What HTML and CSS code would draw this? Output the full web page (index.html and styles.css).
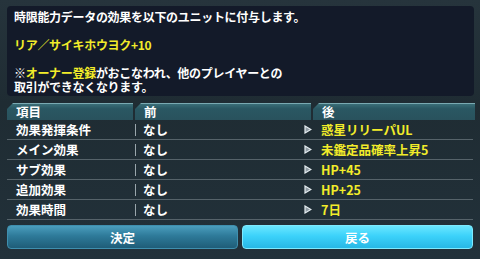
FILE: index.html
```html
<!DOCTYPE html>
<html lang="ja">
<head>
<meta charset="utf-8">
<link rel="stylesheet" href="styles.css">
</head>
<body>
<div class="panel">
  <div class="notice">
    <p class="line">時限能力データの効果を以下のユニットに付与します。</p>
    <p class="line blank">&nbsp;</p>
    <p class="line yellow">リア／サイキホウヨク+10</p>
    <p class="line blank">&nbsp;</p>
    <p class="line">※<span class="yellow">オーナー登録</span>がおこなわれ、他のプレイヤーとの</p>
    <p class="line">取引ができなくなります。</p>
  </div>

  <div class="table">
    <div class="head">
      <div class="hcell">項目</div>
      <div class="hcell">前</div>
      <div class="hcell">後</div>
    </div>
    <div class="row">
      <div class="c-label">効果発揮条件</div>
      <div class="c-before">なし</div>
      <div class="c-after"><svg class="arrow" viewBox="0 0 8 9"><polygon points="1,1 7,4.5 1,8" /></svg><span>惑星リリーパUL</span></div>
    </div>
    <div class="row">
      <div class="c-label">メイン効果</div>
      <div class="c-before">なし</div>
      <div class="c-after"><svg class="arrow" viewBox="0 0 8 9"><polygon points="1,1 7,4.5 1,8" /></svg><span>未鑑定品確率上昇5</span></div>
    </div>
    <div class="row">
      <div class="c-label">サブ効果</div>
      <div class="c-before">なし</div>
      <div class="c-after"><svg class="arrow" viewBox="0 0 8 9"><polygon points="1,1 7,4.5 1,8" /></svg><span>HP+45</span></div>
    </div>
    <div class="row">
      <div class="c-label">追加効果</div>
      <div class="c-before">なし</div>
      <div class="c-after"><svg class="arrow" viewBox="0 0 8 9"><polygon points="1,1 7,4.5 1,8" /></svg><span>HP+25</span></div>
    </div>
    <div class="row">
      <div class="c-label">効果時間</div>
      <div class="c-before">なし</div>
      <div class="c-after"><svg class="arrow" viewBox="0 0 8 9"><polygon points="1,1 7,4.5 1,8" /></svg><span>7日</span></div>
    </div>
  </div>

  <div class="buttons">
    <div class="btn btn-ok">決定</div>
    <div class="btn btn-back">戻る</div>
  </div>
</div>
</body>
</html>
```

FILE: styles.css
```css
* { box-sizing: border-box; }
html, body {
  margin: 0;
  padding: 0;
}
body {
  width: 480px;
  height: 259px;
  overflow: hidden;
  background: linear-gradient(180deg, #26343c 0%, #1f2c33 40%, #22313a 100%);
  font-family: "Noto Sans CJK JP", "Noto Sans", sans-serif;
  font-weight: 700;
  color: #ffffff;
}
.panel {
  padding: 6px 7px 0 7px;
}
.notice {
  background: #131a29;
  border-radius: 4px;
  height: 90px;
  padding: 4px 7px 0 7px;
  margin-right: -1px;
}
.line {
  margin: 0;
  font-size: 12px;
  line-height: 14px;
  letter-spacing: -0.3px;
  white-space: nowrap;
}
.yellow { color: #f2ec2a; }

.table {
  margin-top: 7px;
}
.head {
  display: grid;
  grid-template-columns: 126px 176px 1fr;
  gap: 2px;
  height: 17px;
  margin-right: -2px;
}
.hcell {
  background: linear-gradient(180deg, #3a6e78 0%, #2a5762 30%, #29525d 100%);
  border-top: 1px solid #7aaab2;
  clip-path: polygon(6px 0, 100% 0, 100% 100%, 0 100%, 0 6px);
  font-size: 12.5px;
  line-height: 15px;
  padding-left: 9px;
}
.row {
  display: grid;
  grid-template-columns: 128px 168px 1fr;
  height: 20px;
  border-bottom: 1px solid #56636a;
  align-items: center;
  font-size: 12.5px;
  line-height: 14px;
}
.c-label {
  padding-left: 9px;
  white-space: nowrap;
}
.c-before {
  border-left: 1px solid #9aa6ac;
  height: 12px;
  line-height: 12px;
  padding-left: 7px;
  white-space: nowrap;
}
.c-after {
  display: flex;
  align-items: center;
  color: #f2ec2a;
  white-space: nowrap;
}
.arrow {
  width: 8px;
  height: 9px;
  margin-right: 9px;
  margin-left: 1px;
}
.arrow polygon {
  fill: #8e9aa2;
  stroke: #e4ecf0;
  stroke-width: 1.2;
}

.buttons {
  display: flex;
  gap: 4px;
  margin-top: 5px;
}
.btn {
  flex: 1;
  height: 24px;
  border-radius: 4px;
  display: flex;
  align-items: center;
  justify-content: center;
  font-size: 12.5px;
  color: #ffffff;
}
.btn-ok {
  background: linear-gradient(180deg, #4a9dbd 0%, #2e7a99 45%, #1f5d78 100%);
  border: 1px solid #3f8fae;
}
.btn-back {
  background: linear-gradient(180deg, #6ae6ff 0%, #3cd2fa 45%, #27b8e6 100%);
  border: 1px solid #7deaff;
}
```
